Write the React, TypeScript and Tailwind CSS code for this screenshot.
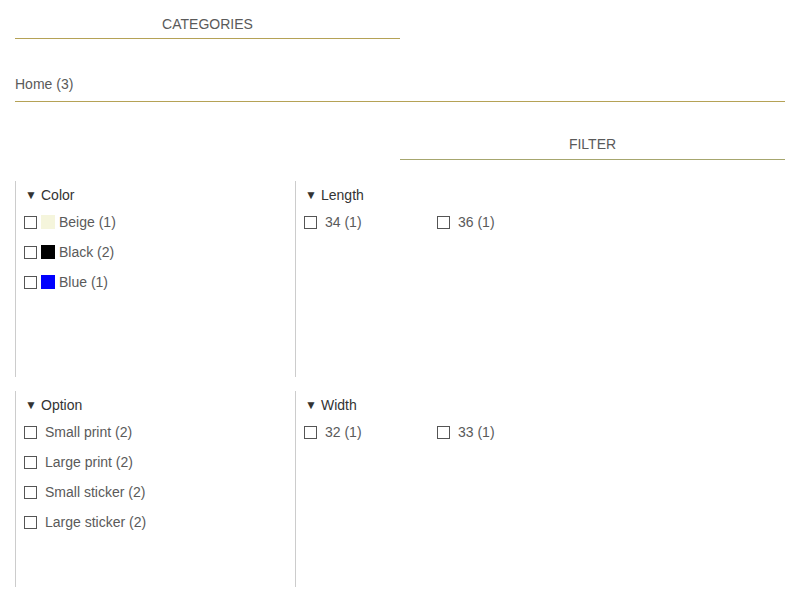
import React from "react";

type Item = { label: string; swatch?: string };
type Group = { title: string; items: Item[]; twoCol?: boolean };

const groups: Group[] = [
  {
    title: "Color",
    items: [
      { label: "Beige (1)", swatch: "#f5f5dc" },
      { label: "Black (2)", swatch: "#000000" },
      { label: "Blue (1)", swatch: "#0000ff" },
    ],
  },
  { title: "Length", items: [{ label: "34 (1)" }, { label: "36 (1)" }], twoCol: true },
  {
    title: "Option",
    items: [
      { label: "Small print (2)" },
      { label: "Large print (2)" },
      { label: "Small sticker (2)" },
      { label: "Large sticker (2)" },
    ],
  },
  { title: "Width", items: [{ label: "32 (1)" }, { label: "33 (1)" }], twoCol: true },
];

function FilterItem({ item }: { item: Item }) {
  return (
    <label className="flex items-center h-[30px] cursor-pointer">
      <span className="w-[13px] h-[13px] border border-[#555] bg-white shrink-0" />
      {item.swatch ? (
        <>
          <span className="w-[14px] h-[14px] ml-[4px] shrink-0" style={{ backgroundColor: item.swatch }} />
          <span className="ml-[4px]">{item.label}</span>
        </>
      ) : (
        <span className="ml-[8px]">{item.label}</span>
      )}
    </label>
  );
}

function FilterGroup({ group }: { group: Group }) {
  return (
    <div className="h-[196px] border-l border-[#cccccc] pt-[5px] pl-[8px]">
      <div className="flex items-center h-[18px] text-[#333]">
        <span className="text-[12px] w-[17px] pl-[1px]">▼</span>
        <span>{group.title}</span>
      </div>
      <div className={group.twoCol ? "grid grid-cols-[133px_133px] mt-[3px]" : "mt-[3px]"}>
        {group.items.map((item) => (
          <FilterItem key={item.label} item={item} />
        ))}
      </div>
    </div>
  );
}

export default function App() {
  return (
    <div
      className="w-[800px] h-[600px] bg-white px-[15px] text-[14px] leading-[18px] text-[#5a5a5a]"
      style={{ fontFamily: '"Liberation Sans", Arial, sans-serif' }}
    >
      <div className="w-[385px] pt-[15px] pb-[5px] border-b border-[#b5a256] text-center">
        CATEGORIES
      </div>

      <div className="mt-[36px] pb-[8px] border-b border-[#b5a256]">Home (3)</div>

      <div className="w-[385px] ml-auto mt-[33px] pb-[6px] border-b border-[#a6a66e] text-center">
        FILTER
      </div>

      <div className="grid grid-cols-[280px_280px] gap-y-[14px] mt-[21px]">
        {groups.map((g) => (
          <FilterGroup key={g.title} group={g} />
        ))}
      </div>
    </div>
  );
}
